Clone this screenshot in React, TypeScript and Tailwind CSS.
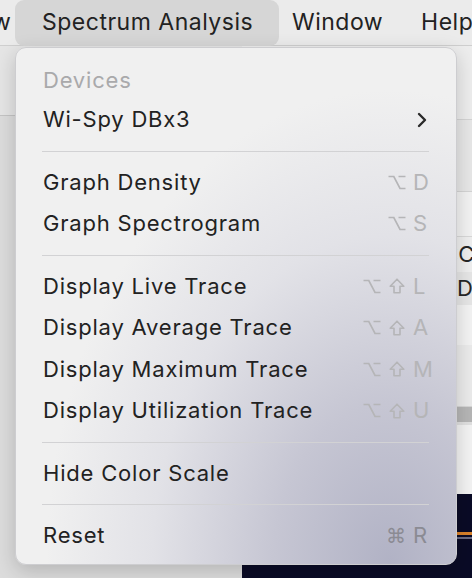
type Item = {
  label: string;
  keys?: ('opt' | 'shift')[];
  letter?: string;
};

const groups: Item[][] = [
  [
    { label: 'Graph Density', keys: ['opt'], letter: 'D' },
    { label: 'Graph Spectrogram', keys: ['opt'], letter: 'S' },
  ],
  [
    { label: 'Display Live Trace', keys: ['opt', 'shift'], letter: 'L' },
    { label: 'Display Average Trace', keys: ['opt', 'shift'], letter: 'A' },
    { label: 'Display Maximum Trace', keys: ['opt', 'shift'], letter: 'M' },
    { label: 'Display Utilization Trace', keys: ['opt', 'shift'], letter: 'U' },
  ],
  [{ label: 'Hide Color Scale' }],
];

function OptionKey() {
  return (
    <svg width="18" height="15" viewBox="0 0 18 15" fill="none" stroke="currentColor" strokeWidth="1.7">
      <path d="M0.5 1.5 H5.8 L12 13.5 H17.5 M10.5 1.5 H17.5" />
    </svg>
  );
}

function ShiftKey() {
  return (
    <svg width="16" height="16" viewBox="0 0 16 16" fill="none" stroke="currentColor" strokeWidth="1.6" strokeLinejoin="round">
      <path d="M8 1.2 L14.8 8.2 H11 V14.8 H5 V8.2 H1.2 Z" />
    </svg>
  );
}

function Separator() {
  return (
    <div className="h-[21px] flex items-center pl-[26px] pr-[27px]">
      <div className="h-px w-full bg-[#d2d2d4]" />
    </div>
  );
}

function Shortcut({ keys, letter }: { keys: ('opt' | 'shift')[]; letter: string }) {
  return (
    <div className="flex items-center text-[#b5b5b7]">
      {keys.map((k, i) => (
        <span key={i} className="w-[25px] flex justify-center">
          {k === 'opt' ? <OptionKey /> : <ShiftKey />}
        </span>
      ))}
      <span className="w-[21px] pl-[4px] text-[22px]">{letter}</span>
    </div>
  );
}

function Row({ item }: { item: Item }) {
  return (
    <div className="h-[41.5px] flex items-center justify-between pl-[27px] pr-[26px] text-[22px] tracking-[0.8px] text-[#222222]">
      <span>{item.label}</span>
      {item.keys && item.letter && <Shortcut keys={item.keys} letter={item.letter} />}
    </div>
  );
}

export default function App() {
  return (
    <div className="relative w-[472px] h-[578px] overflow-hidden bg-[#e2e2e2] font-['Inter',sans-serif]">
      {/* menu bar */}
      <div className="h-[46px] flex items-center bg-[#ebebeb] border-b border-[#cfcfcf] text-[23px] tracking-[0.5px] text-[#222222]">
        <span className="ml-[-44px] w-[59px] shrink-0 overflow-hidden">View</span>
        <div className="h-[46px] w-[264px] shrink-0 flex items-center pl-[27px] rounded-[9px] bg-[#d6d6d6]">
          Spectrum Analysis
        </div>
        <span className="ml-[13px] shrink-0">Window</span>
        <span className="ml-[38px] shrink-0">Help</span>
      </div>

      {/* window behind the menu */}
      <div className="flex h-[532px]">
        <div className="w-[242px] shrink-0 flex flex-col">
          <div className="h-[70px] bg-[#e5e5e5] border-b border-[#c4c4c4]" />
          <div className="flex-1 bg-[#dcdcdc]" />
        </div>
        <div className="flex-1 min-w-0 overflow-hidden flex flex-col text-[22px] text-[#262626]">
          <div className="h-[74px] bg-[#ededed] border-b border-[#d4d4d4]" />
          <div className="h-[72px] bg-[#e7e7e7] border-b border-[#d4d4d4]" />
          <div className="h-[45px] bg-[#f2f2f2] border-b border-[#d8d8d8]" />
          <div className="h-[35px] flex items-center pl-[210px] bg-[#efefef] whitespace-nowrap">:Co</div>
          <div className="h-[33px] flex items-center pl-[215px] bg-[#e6e6e6] whitespace-nowrap">Di</div>
          <div className="h-[40px] bg-[#f3f3f3]" />
          <div className="h-[62px] bg-[#ebebeb] border-b border-[#d6d6d6]" />
          <div className="h-[15px] bg-[#b6b6b6]" />
          <div className="h-[72px] bg-[#f3f3f3] border-t-[3px] border-[#e0e0e0]" />
          <div className="flex-1 bg-[#0a0b26] flex flex-col pt-[38px]">
            <div className="h-[3px] bg-[#d9822b]" />
            <div className="h-[2px] mt-[2px] bg-[#6a6c86]" />
          </div>
        </div>
      </div>

      {/* dropdown menu */}
      <div className="absolute left-[15px] top-[47px] w-[442px] h-[518px] rounded-[11px] border border-[#cdcdd0] shadow-[0_6px_20px_rgba(0,0,0,0.18)] overflow-hidden bg-[radial-gradient(ellipse_at_85%_100%,#b1b2c5_0%,#c6c6d3_22%,#e2e2e7_45%,#f0f0f0_65%)] pt-[13px]">
        <div className="h-[38px] flex items-center pl-[27px] text-[22px] tracking-[0.8px] text-[#a9a9ab]">Devices</div>
        <div className="h-[41.5px] flex items-center justify-between pl-[27px] pr-[29px] text-[22px] tracking-[0.8px] text-[#222222]">
          <span>Wi-Spy DBx3</span>
          <svg width="10" height="16" viewBox="0 0 10 16" fill="none" stroke="#2a2a2a" strokeWidth="2.4" strokeLinecap="round" strokeLinejoin="round">
            <path d="M2 2 L8 8 L2 14" />
          </svg>
        </div>
        {groups.map((g, gi) => (
          <div key={gi}>
            <Separator />
            {g.map((item) => (
              <Row key={item.label} item={item} />
            ))}
          </div>
        ))}
        <Separator />
        <div className="h-[41.5px] flex items-center justify-between pl-[27px] pr-[26px] text-[22px] tracking-[0.8px] text-[#222222]">
          <span>Reset</span>
          <div className="flex items-center text-[#8b8b93]">
            <span className="w-[25px] text-center text-[20px] font-['DejaVu_Sans',sans-serif]">⌘</span>
            <span className="w-[21px] pl-[4px] text-[22px]">R</span>
          </div>
        </div>
      </div>
    </div>
  );
}
